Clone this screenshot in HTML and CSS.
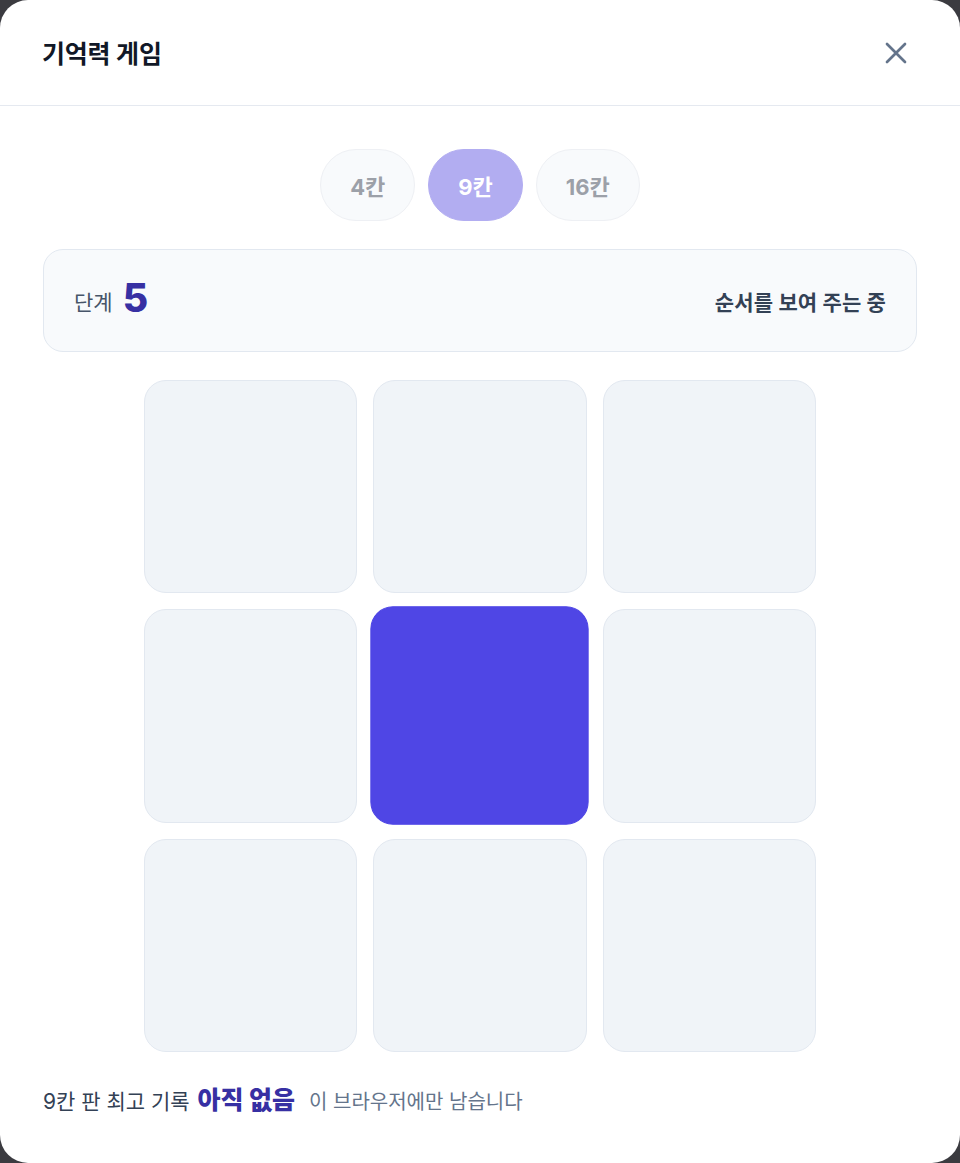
FILE: index.html
```html
<!DOCTYPE html>
<html lang="ko">
<head>
  <meta charset="UTF-8" />
  <meta name="viewport" content="width=device-width, initial-scale=1.0"/>
  <title>기억력 게임</title>
  <link rel="stylesheet" href="styles.css">
</head>
<body>
  <div class="modal">
    <div class="modal-header">
      <h1>기억력 게임</h1>
      <button class="close" aria-label="닫기">
        <svg width="24" height="24" viewBox="0 0 24 24" fill="none" stroke="currentColor" stroke-width="2.7" stroke-linecap="round">
          <path d="M3 3 L21 21 M21 3 L3 21" />
        </svg>
      </button>
    </div>

    <div class="modal-body">
      <div class="tabs">
        <button class="tab">4칸</button>
        <button class="tab active">9칸</button>
        <button class="tab">16칸</button>
      </div>

      <div class="status">
        <div class="level">단계 <strong>5</strong></div>
        <div class="state">순서를 보여 주는 중</div>
      </div>

      <div class="board">
        <div class="cell"></div>
        <div class="cell"></div>
        <div class="cell"></div>
        <div class="cell"></div>
        <div class="cell lit"></div>
        <div class="cell"></div>
        <div class="cell"></div>
        <div class="cell"></div>
        <div class="cell"></div>
      </div>

      <p class="record">
        9칸 판 최고 기록 <strong>아직 없음</strong>
        <span class="note">이 브라우저에만 남습니다</span>
      </p>
    </div>
  </div>
</body>
</html>
```

FILE: styles.css
```css
* {
  box-sizing: border-box;
}

body {
  margin: 0;
  background-color: #3b3b40;
  font-family: Inter, "Noto Sans CJK KR", sans-serif;
  color: #1e293b;
}

.modal {
  width: 960px;
  height: 1163px;
  background-color: #fff;
  border-radius: 28px;
  overflow: hidden;
}

.modal-header {
  height: 106px;
  padding: 0 43px 0 42px;
  display: flex;
  align-items: center;
  justify-content: space-between;
  border-bottom: 1px solid #e5e9f0;
}

.modal-header h1 {
  margin: 0 0 2px;
  font-size: 25px;
  font-weight: 700;
  color: #111827;
  letter-spacing: -0.2px;
}

.close {
  border: 0;
  background: none;
  padding: 0;
  width: 24px;
  height: 24px;
  color: #64748b;
  margin-right: 9px;
  cursor: pointer;
}

.modal-body {
  padding: 43px 43px 0;
}

.tabs {
  display: flex;
  justify-content: center;
  gap: 13px;
}

.tab {
  height: 72px;
  padding: 0 29px;
  border: 1px solid #eef0f4;
  border-radius: 999px;
  background-color: #f8fafc;
  font-family: Inter, "Noto Sans CJK KR", sans-serif;
  font-size: 22px;
  font-weight: 700;
  color: #9ca0a8;
}

.tab.active {
  background-color: #b2adf1;
  border-color: #b2adf1;
  color: #fff;
}

.status {
  margin-top: 28px;
  height: 103px;
  padding: 0 30px;
  display: flex;
  align-items: center;
  justify-content: space-between;
  background-color: #f8fafc;
  border: 1px solid #e2e8f0;
  border-radius: 20px;
}

.level {
  font-size: 21px;
  color: #475569;
  display: flex;
  align-items: center;
  gap: 10px;
}

.level strong {
  font-size: 39px;
  font-weight: 800;
  color: #3730a3;
  margin-top: -6px;
}

.state {
  font-size: 21px;
  font-weight: 700;
  color: #334155;
  letter-spacing: 0.15px;
}

.board {
  width: 672px;
  margin: 28px auto 0;
  display: grid;
  grid-template-columns: repeat(3, 1fr);
  gap: 16px;
}

.cell {
  aspect-ratio: 1;
  background-color: #f0f4f8;
  border: 1px solid #e2e8f0;
  border-radius: 22px;
}

.cell.lit {
  background-color: #4f46e5;
  border-color: #4f46e5;
  transform: scale(1.025);
}

.record {
  margin: 34px 0 0;
  line-height: 28px;
  font-size: 21px;
  color: #334155;
}

.record strong {
  font-size: 25px;
  font-weight: 800;
  color: #3730a3;
  margin: 0 8px 0 2px;
}

.note {
  font-size: 20px;
  color: #64748b;
}
```
